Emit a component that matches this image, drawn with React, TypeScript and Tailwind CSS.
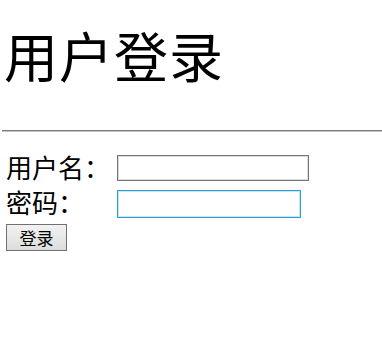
export default function App() {
  return (
    <div className="min-h-[338px] bg-white text-black font-['Noto_Sans_CJK_SC','Noto_Sans_CJK_JP',sans-serif]">
      <h1 className="pt-[28px] pl-[4px] text-[54px] leading-[54px] h-[86px] font-normal tracking-[1px]">
        用户登录
      </h1>
      <div className="mt-[44px] ml-[2px] border-t border-b border-t-[#7a7a7a] border-b-[#c6c6c6]" />
      <form className="flex flex-col pl-[6px] pt-[20px]" onSubmit={(e) => e.preventDefault()}>
        <div className="flex items-start h-[35px]">
          <label className="w-[111px] text-[26px] leading-[30px]">用户名：</label>
          <input
            type="text"
            className="mt-[3px] w-[192px] h-[26px] border border-[#767676] shadow-[inset_0_0_0_1px_#dadada] outline-none bg-white"
          />
        </div>
        <div className="flex items-start h-[37px]">
          <label className="w-[111px] text-[26px] leading-[30px]">密码：</label>
          <input
            type="password"
            className="mt-[3px] w-[184px] h-[28px] border border-[#2a9fd8] shadow-[inset_0_0_0_1px_#c8e6f5] outline-none bg-white"
          />
        </div>
        <div>
          <button
            type="submit"
            className="w-[61px] h-[27px] border border-[#707070] bg-gradient-to-b from-[#f2f2f2] to-[#dddddd] text-[17px] leading-none"
          >
            登录
          </button>
        </div>
      </form>
    </div>
  );
}
